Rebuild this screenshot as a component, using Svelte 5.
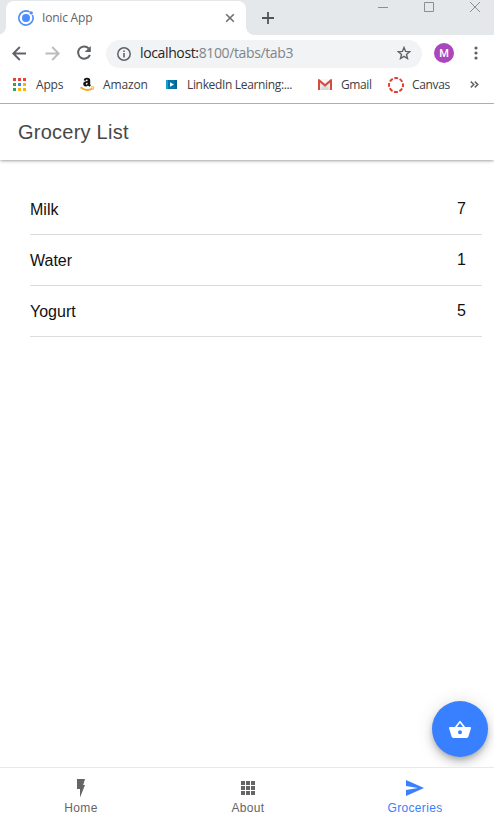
<script>
  const groceries = [
    { name: 'Milk', quantity: 7 },
    { name: 'Water', quantity: 1 },
    { name: 'Yogurt', quantity: 5 }
  ];
  const appColors = ['#ea4335', '#ea4335', '#ea4335', '#34a058', '#2b8cf0', '#fbb305', '#34a058', '#fbb305', '#fbb305'];
</script>

<div class="window">
  <div class="strip">
    <div class="tab">
      <svg class="ionic" width="16" height="16" viewBox="0 0 16 16">
        <path d="M11.6 1.9A7.1 7.1 0 1 0 14.4 5" fill="none" stroke="#4c8dff" stroke-width="1.6" />
        <circle cx="8" cy="8" r="4" fill="#4c8dff" />
        <circle cx="13.2" cy="2.9" r="1.7" fill="#4c8dff" />
      </svg>
      <span class="tabname">Ionic App</span>
      <svg class="close" width="10" height="10" viewBox="0 0 10 10"><path d="M1.2 1.2l7.6 7.6M8.8 1.2L1.2 8.8" stroke="#6c7074" stroke-width="1.6" /></svg>
    </div>
    <svg class="plus" width="12" height="12" viewBox="0 0 12 12"><path d="M6 0v12M0 6h12" stroke="#505458" stroke-width="1.8" /></svg>
    <div class="controls">
      <svg width="10" height="11" viewBox="0 0 10 11"><path d="M0 6.5h10" stroke="#8c8f92" /></svg>
      <svg width="10" height="11" viewBox="0 0 10 11"><path d="M.5 1.5h9v9h-9z" fill="none" stroke="#8c8f92" /></svg>
      <svg width="10" height="11" viewBox="0 0 10 11"><path d="M0 1l10 10M10 1L0 11" stroke="#8c8f92" /></svg>
    </div>
  </div>

  <div class="toolbar">
    <svg class="back" width="15" height="15" viewBox="0 0 15 15"><path d="M14 7.5H1.8M7.8 1L1.3 7.5l6.5 6.5" fill="none" stroke="#5f6368" stroke-width="1.9" /></svg>
    <svg class="forward" width="15" height="15" viewBox="0 0 15 15"><path d="M.5 7.5h12.7M7.2 1l6.5 6.5L7.2 14" fill="none" stroke="#babcbe" stroke-width="1.9" /></svg>
    <svg class="reload" width="16" height="16" viewBox="0 0 16 16"><path d="M12.7 3.4A6.1 6.1 0 1 0 13.9 9.8" fill="none" stroke="#5f6368" stroke-width="2" /><path d="M14.8 1v6.1H8.7z" fill="#5f6368" /></svg>
    <div class="omnibox">
      <svg width="14" height="14" viewBox="0 0 14 14"><circle cx="7" cy="7" r="6.2" fill="none" stroke="#5f6368" stroke-width="1.5" /><path d="M7 6v4.5M7 3.4v1.6" stroke="#5f6368" stroke-width="1.6" /></svg>
      <span class="url">localhost:<i>8100/tabs/tab3</i></span>
      <svg class="star" width="14" height="14" viewBox="0 0 14 14"><path d="M7 1.5l1.6 3.9 4.1.3-3.2 2.7 1 4.1L7 10.3l-3.5 2.2 1-4.1-3.2-2.7 4.1-.3z" fill="none" stroke="#5f6368" stroke-width="1.4" /></svg>
    </div>
    <div class="avatar">M</div>
    <svg class="more" width="4" height="14" viewBox="0 0 4 14"><g fill="#5f6368"><circle cx="2" cy="2" r="1.6" /><circle cx="2" cy="7" r="1.6" /><circle cx="2" cy="12" r="1.6" /></g></svg>
  </div>

  <div class="bookmarks">
    <div class="mark apps">
      <svg width="13" height="13" viewBox="0 0 13 13">
        {#each appColors as color, i}
          <rect x={(i % 3) * 5} y={Math.floor(i / 3) * 5} width="3" height="3" fill={color} />
        {/each}
      </svg>
      <span>Apps</span>
    </div>
    <div class="mark amazon">
      <svg width="15" height="15" viewBox="0 0 15 15">
        <path d="M3.7 3.5C3.9 1.4 5.2.7 7.1.7c2.2 0 3.1 1 3.1 2.8v3.2c0 .8.3 1 .8 1.6L9.3 9.8 8 8.5C6.3 10.3 3.2 9.6 3.2 7c0-2.2 2-2.9 4.4-2.9 0-1 0-1.5-.8-1.5-.5 0-.8.3-.9 1.1zm3.9 2.2c-1.2 0-1.8.3-1.8 1.2 0 1.2 1.8 1.1 1.8-.6z" fill="#111" />
        <path d="M.5 10.3c4 3.4 8.2 3.4 12 1.2" fill="none" stroke="#f6a623" stroke-width="1.9" />
        <path d="M10.8 10c1.4-.4 2.3-.3 2.9 0 0 1.1-.3 2-1.2 3" fill="none" stroke="#f6a623" stroke-width="1" />
      </svg>
      <span>Amazon</span>
    </div>
    <div class="mark linkedin">
      <svg width="11" height="9" viewBox="0 0 11 9"><path d="M0 0h11v9H0z" fill="#0077a8" /><path d="M0 0h2v9H0z" fill="#16a0cf" /><path d="M9 0h2v9H9z" fill="#075f91" /><path d="M4 2.3l4 2.2-4 2.2z" fill="#fff" /></svg>
      <span>LinkedIn Learning:...</span>
    </div>
    <div class="mark gmail">
      <svg width="14" height="11" viewBox="0 0 14 11"><path d="M0 0h14v11H0z" fill="#e9e9e9" /><path d="M2 11l5-5 5 5" fill="#d8d8d8" /><path d="M1.5 0h11L7 4.7z" fill="#f8f8f8" /><path d="M0 11V1Q0 0 1 0l6 5 6-5q1 0 1 1v10h-2V3.5L7 7.8 2 3.5V11z" fill="#d54b3d" /></svg>
      <span>Gmail</span>
    </div>
    <div class="mark canvas">
      <svg width="16" height="16" viewBox="0 0 16 16"><circle cx="8" cy="8" r="7" fill="none" stroke="#e33b2e" stroke-width="2" stroke-dasharray="3.9 1.6" stroke-dashoffset="1.95" /></svg>
      <span>Canvas</span>
    </div>
    <svg class="chevrons" width="9" height="7" viewBox="0 0 9 7"><path d="M.8.6l3 2.9-3 2.9M4.8.6l3 2.9-3 2.9" fill="none" stroke="#5f6368" stroke-width="1.5" /></svg>
  </div>

  <header><h1>Grocery List</h1></header>

  <main>
    <ul>
      {#each groceries as item}
        <li><span>{item.name}</span><span class="quantity">{item.quantity}</span></li>
      {/each}
    </ul>
    <button class="fab" aria-label="Add grocery">
      <svg width="24" height="24" viewBox="0 0 24 24"><path fill="#fff" d="M17.21 10l-4.38-5.56a1 1 0 0 0-1.66 0L6.79 10H2c-.55 0-1 .45-1 1 0 .09.01.18.04.27l2.54 8.27C3.81 20.38 4.58 21 5.5 21h13c.92 0 1.69-.62 1.93-1.46l2.54-8.27L23 11c0-.55-.45-1-1-1zM9 10l3-3.9L15 10zm3 7.2a2 2 0 1 1 0-4 2 2 0 0 1 0 4z" /></svg>
    </button>
  </main>

  <nav>
    <div class="item">
      <svg width="22" height="22" viewBox="0 0 22 22"><path d="M7 2h8L13.2 8H15l-5 12.5V12H7z" fill="#656565" /></svg>
      <span>Home</span>
    </div>
    <div class="item">
      <svg width="22" height="22" viewBox="0 0 22 22">
        {#each [4, 9, 14] as y}
          {#each [4, 9, 14] as x}<rect {x} {y} width="4" height="4" fill="#656565" />{/each}
        {/each}
      </svg>
      <span>About</span>
    </div>
    <div class="item selected">
      <svg width="22" height="22" viewBox="0 0 22 22"><path d="M2 3l18 8-18 8v-6l12-2-12-2z" fill="#3880ff" /></svg>
      <span>Groceries</span>
    </div>
  </nav>
</div>

<style>
  .window { width: 494px; height: 822px; display: flex; flex-direction: column; overflow: hidden; background: #fff; font-family: "Liberation Sans", sans-serif; }
  .window *, .window { box-sizing: border-box; }
  svg { display: block; flex: none; }
  .strip { height: 35px; flex: none; display: flex; background: #e4e8eb; font-family: "Open Sans", sans-serif; }
  .tab { position: relative; width: 240px; height: 34px; margin: 1px 0 0 6px; padding: 0 11px 0 12px; display: flex; align-items: center; background: #fff; border-radius: 8px 8px 0 0; }
  .tab::before, .tab::after { content: ""; position: absolute; bottom: 0; width: 8px; height: 8px; }
  .tab::before { left: -8px; background: radial-gradient(circle at 0 0, transparent 7.5px, #fff 8px); }
  .tab::after { right: -8px; background: radial-gradient(circle at 100% 0, transparent 7.5px, #fff 8px); }
  .tabname { margin-left: 8px; padding-bottom: 1px; font-size: 12px; color: #606468; letter-spacing: -.2px; white-space: nowrap; }
  .close { margin-left: auto; }
  .plus { margin: 12px 0 0 16px; }
  .controls { display: flex; gap: 36px; margin: 1px 14px 0 auto; }
  .toolbar { height: 35px; flex: none; display: flex; align-items: center; padding: 1px 16px 0 12px; font-family: "Open Sans", sans-serif; }
  .forward { margin-left: 18px; }
  .reload { margin-left: 16px; }
  .omnibox { width: 316px; height: 28px; margin: 1px 0 0 14px; padding: 0 11px; display: flex; align-items: center; border-radius: 14px; background: #f1f3f4; }
  .url { margin: -1px 0 0 9px; font-size: 14px; line-height: 20px; color: #24272a; letter-spacing: -.37px; white-space: nowrap; }
  .url i { font-style: normal; color: #80858a; }
  .star { margin: -1px 0 0 auto; }
  .avatar { width: 20px; height: 20px; margin-left: 12px; border-radius: 50%; background: #ab47bc; color: #fff; font: 500 11px/21px Roboto, sans-serif; text-align: center; }
  .more { margin-left: auto; }
  .bookmarks { height: 34px; flex: none; display: flex; align-items: center; padding: 0 15px 4px 13px; border-bottom: 1px solid #b2b2b2; font: 12px/16px "Open Sans", sans-serif; color: #3d4043; }
  .mark { display: flex; align-items: center; white-space: nowrap; }
  .mark span { margin-left: 10px; }
  .apps { width: 67px; letter-spacing: -.2px; }
  .amazon { width: 86px; letter-spacing: -.15px; }
  .amazon span { margin-left: 8px; }
  .linkedin { width: 152px; letter-spacing: -.34px; }
  .gmail { width: 70px; letter-spacing: -.4px; }
  .gmail span { margin-left: 9px; }
  .canvas { letter-spacing: -.35px; }
  .canvas span { margin-left: 8px; }
  .chevrons { margin-left: auto; }
  header { position: relative; height: 56px; flex: none; display: flex; align-items: center; padding: 0 18px; box-shadow: 0 2px 4px -1px rgba(0,0,0,.2), 0 1px 2px rgba(0,0,0,.2); }
  h1 { margin: 0; font-size: 20px; line-height: 24px; font-weight: 400; letter-spacing: .24px; color: #484848; }
  main { position: relative; flex: 1; padding: 24px 12px 0 30px; }
  ul { list-style: none; margin: 0; padding: 0; }
  li { height: 51px; display: flex; justify-content: space-between; padding: 16px 16px 0 0; border-bottom: 1px solid #dcdcdc; font-size: 16px; line-height: 20px; color: #111; }
  .quantity { line-height: 18px; }
  .fab { position: absolute; right: 6px; bottom: 10px; width: 56px; height: 56px; display: grid; place-items: center; border: 0; border-radius: 50%; padding: 0; background: #3880ff; box-shadow: 0 3px 5px -1px rgba(0,0,0,.2), 0 6px 10px rgba(0,0,0,.14), 0 1px 18px rgba(0,0,0,.12); }
  nav { position: relative; height: 55px; flex: none; display: flex; justify-content: center; padding-left: 2px; border-top: 1px solid #e9e9e9; background: #fff; }
  .item { width: 167px; flex: none; display: flex; flex-direction: column; align-items: center; padding-top: 9px; font-size: 12px; line-height: 14px; letter-spacing: .34px; color: #656565; }
  .item span { margin-top: 2px; }
  .selected { color: #3880ff; }
</style>
